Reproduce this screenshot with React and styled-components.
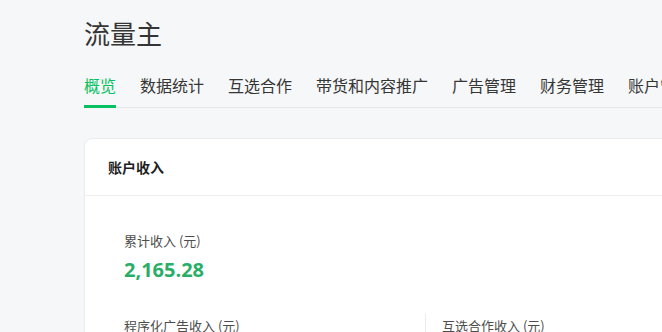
import React from 'react';
import styled, { createGlobalStyle } from 'styled-components';

const GlobalStyle = createGlobalStyle`
  html, body {
    margin: 0;
    padding: 0;
    background: #f6f7f8;
    overflow: hidden;
  }
  body {
    font-family: "Noto Sans CJK SC", "Noto Sans", sans-serif;
    color: #353535;
  }
`;

const Page = styled.div`
  width: 1100px;
  padding: 13px 0 0 84px;
`;

const Title = styled.h1`
  margin: 0;
  font-size: 26px;
  line-height: 40px;
  font-weight: 400;
  color: #353535;
`;

const TabBar = styled.div`
  display: flex;
  gap: 24px;
  margin-top: 20px;
  border-bottom: 1px solid #e5e6e7;
`;

const Tab = styled.div`
  position: relative;
  font-size: 16px;
  line-height: 24px;
  padding-bottom: 10px;
  white-space: nowrap;
  color: ${p => (p.active ? '#07c160' : '#353535')};

  &::after {
    content: '';
    display: ${p => (p.active ? 'block' : 'none')};
    position: absolute;
    left: 0;
    right: 0;
    bottom: -1px;
    height: 3px;
    background: #07c160;
  }
`;

const Card = styled.div`
  margin-top: 30px;
  background: #fff;
  border: 1px solid #ebebeb;
  border-radius: 8px;
`;

const CardHeader = styled.div`
  height: 56px;
  display: flex;
  align-items: center;
  padding-left: 23px;
  font-size: 14px;
  font-weight: 700;
  color: #1f1f1f;
  border-bottom: 1px solid #eeeeee;
`;

const CardBody = styled.div`
  padding: 35px 0 0 39px;
`;

const Label = styled.div`
  font-size: 13px;
  line-height: 20px;
  color: #4d4d4d;
`;

const Amount = styled.div`
  margin-top: 5px;
  font-size: 20px;
  line-height: 28px;
  font-weight: 700;
  color: #2aae67;
  font-family: "Open Sans", "Noto Sans", sans-serif;
`;

const Columns = styled.div`
  display: flex;
  margin-top: 30px;
`;

const Column = styled.div`
  width: ${p => (p.first ? '301px' : '300px')};
  padding-left: ${p => (p.first ? '0' : '16px')};
  border-left: ${p => (p.first ? 'none' : '1px solid #ececec')};
  padding-top: 2px;
`;

const tabs = ['概览', '数据统计', '互选合作', '带货和内容推广', '广告管理', '财务管理', '账户管理'];

export default function App() {
  return (
    <>
      <GlobalStyle />
      <Page>
        <Title>流量主</Title>
        <TabBar>
          {tabs.map((t, i) => (
            <Tab key={t} active={i === 0}>{t}</Tab>
          ))}
        </TabBar>
        <Card>
          <CardHeader>账户收入</CardHeader>
          <CardBody>
            <Label>累计收入 (元)</Label>
            <Amount>2,165.28</Amount>
            <Columns>
              <Column first>
                <Label>程序化广告收入 (元)</Label>
                <Amount>1,820.46</Amount>
              </Column>
              <Column>
                <Label>互选合作收入 (元)</Label>
                <Amount>344.82</Amount>
              </Column>
            </Columns>
          </CardBody>
        </Card>
      </Page>
    </>
  );
}
